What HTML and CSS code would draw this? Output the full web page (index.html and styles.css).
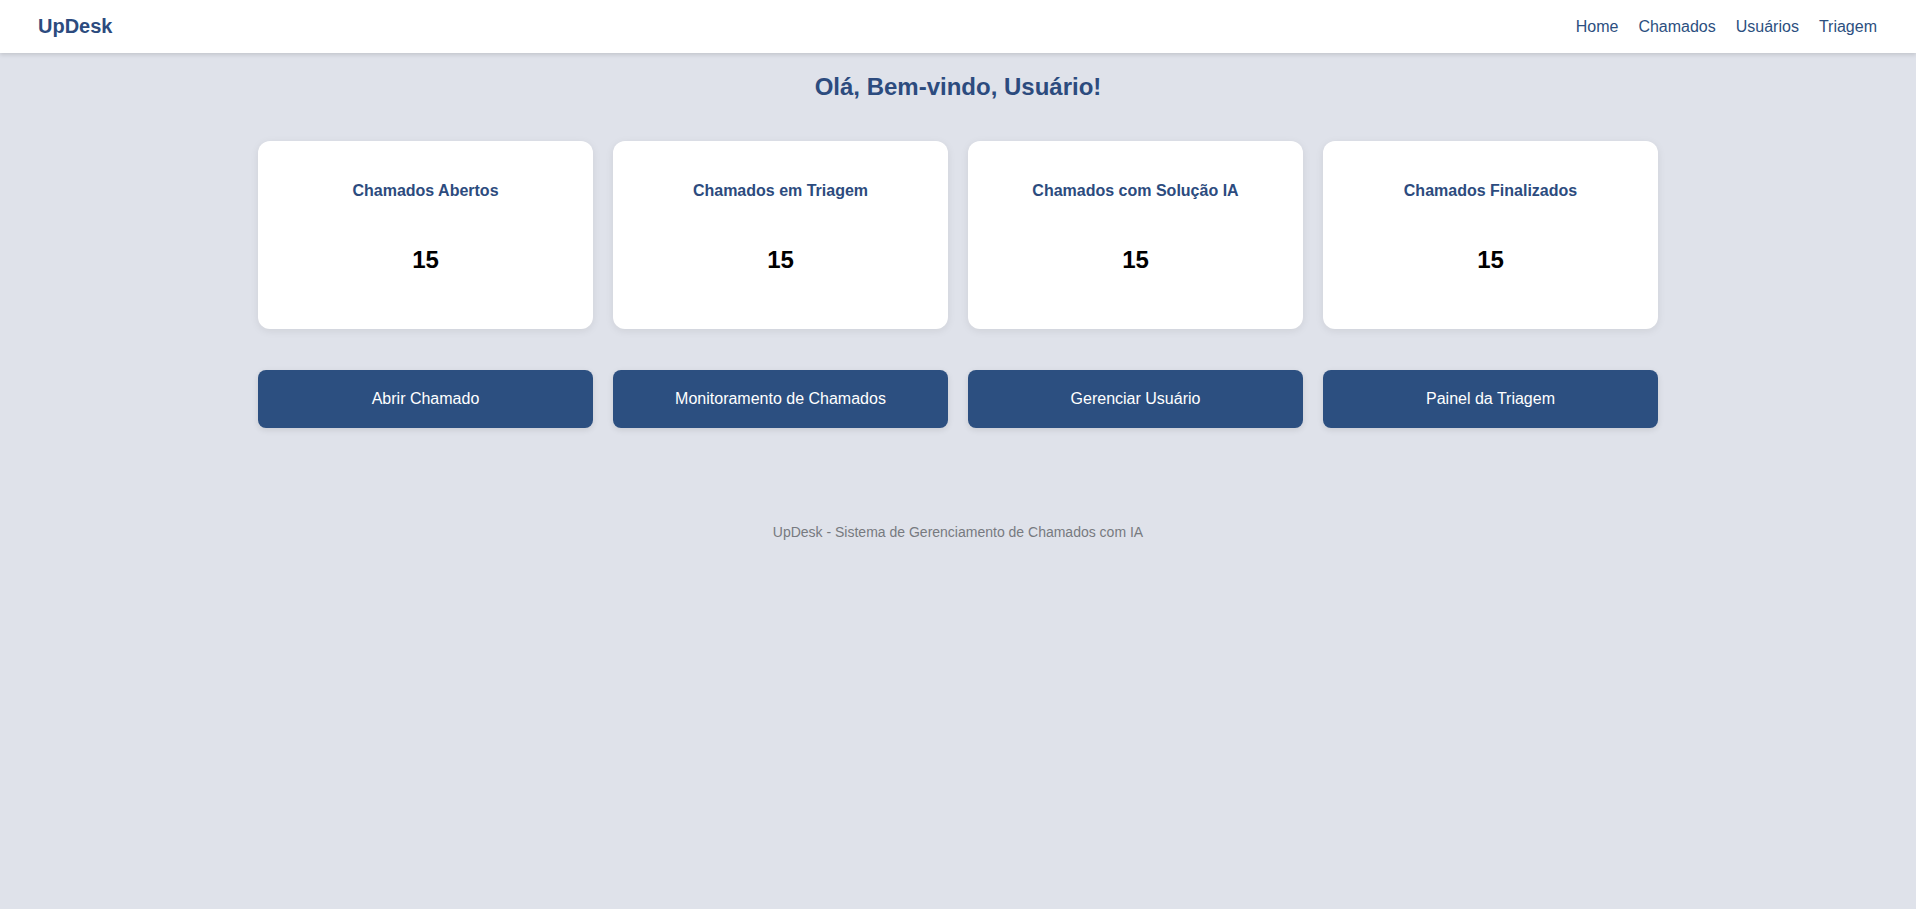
FILE: index.html
```html
<!DOCTYPE html>
<html lang="pt-BR">
<head>
<meta charset="utf-8">
<title>UpDesk</title>
<link rel="stylesheet" href="styles.css">
</head>
<body>
<header class="topbar">
  <div class="logo">UpDesk</div>
  <nav class="nav">
    <a href="#">Home</a>
    <a href="#">Chamados</a>
    <a href="#">Usuários</a>
    <a href="#">Triagem</a>
  </nav>
</header>
<main class="main">
  <h1 class="welcome">Olá, Bem-vindo, Usuário!</h1>
  <section class="cards">
    <div class="card"><h3 class="card-title">Chamados Abertos</h3><div class="card-num">15</div></div>
    <div class="card"><h3 class="card-title">Chamados em Triagem</h3><div class="card-num">15</div></div>
    <div class="card"><h3 class="card-title">Chamados com Solução IA</h3><div class="card-num">15</div></div>
    <div class="card"><h3 class="card-title">Chamados Finalizados</h3><div class="card-num">15</div></div>
  </section>
  <section class="actions">
    <a class="btn" href="#">Abrir Chamado</a>
    <a class="btn" href="#">Monitoramento de Chamados</a>
    <a class="btn" href="#">Gerenciar Usuário</a>
    <a class="btn" href="#">Painel da Triagem</a>
  </section>
</main>
<footer class="footer">UpDesk - Sistema de Gerenciamento de Chamados com IA</footer>
</body>
</html>
```
FILE: styles.css
```css
* { box-sizing: border-box; }
html, body {
  margin: 0;
  padding: 0;
  background: #dfe2ea;
  font-family: "Liberation Sans", Arial, sans-serif;
}
.topbar {
  height: 53px;
  background: #ffffff;
  display: flex;
  align-items: center;
  justify-content: space-between;
  padding: 0 39px 0 38px;
  box-shadow: 0 2px 4px rgba(0, 0, 0, 0.12);
  position: relative;
}
.logo {
  color: #2c4b7e;
  font-weight: bold;
  font-size: 20px;
}
.nav {
  display: flex;
  gap: 20px;
}
.nav a {
  color: #2c4f80;
  text-decoration: none;
  font-size: 16px;
}
.main {
  max-width: 1400px;
  margin: 0 auto;
  padding-top: 20px;
}
.welcome {
  margin: 0;
  text-align: center;
  color: #2c4b7e;
  font-size: 24px;
  line-height: 28px;
  font-weight: bold;
}
.cards {
  margin-top: 40px;
  display: grid;
  grid-template-columns: repeat(4, 1fr);
  gap: 20px;
}
.card {
  background: #ffffff;
  border-radius: 12px;
  height: 188px;
  padding: 40px 16px 0;
  text-align: center;
  box-shadow: 0 2px 8px rgba(0, 0, 0, 0.08);
}
.card-title {
  margin: 0;
  color: #2c4b7e;
  font-size: 16px;
  line-height: 19px;
  font-weight: bold;
}
.card-num {
  margin-top: 46px;
  font-size: 24px;
  line-height: 28px;
  font-weight: bold;
  color: #000000;
}
.actions {
  margin-top: 41px;
  display: grid;
  grid-template-columns: repeat(4, 1fr);
  gap: 20px;
}
.btn {
  height: 58px;
  display: flex;
  align-items: center;
  justify-content: center;
  background: #2c4f80;
  color: #ffffff;
  text-decoration: none;
  font-size: 16px;
  border-radius: 8px;
  box-shadow: 0 2px 6px rgba(0, 0, 0, 0.1);
}
.footer {
  margin-top: 96px;
  text-align: center;
  color: #777a80;
  font-size: 14px;
  line-height: 16px;
}
```
